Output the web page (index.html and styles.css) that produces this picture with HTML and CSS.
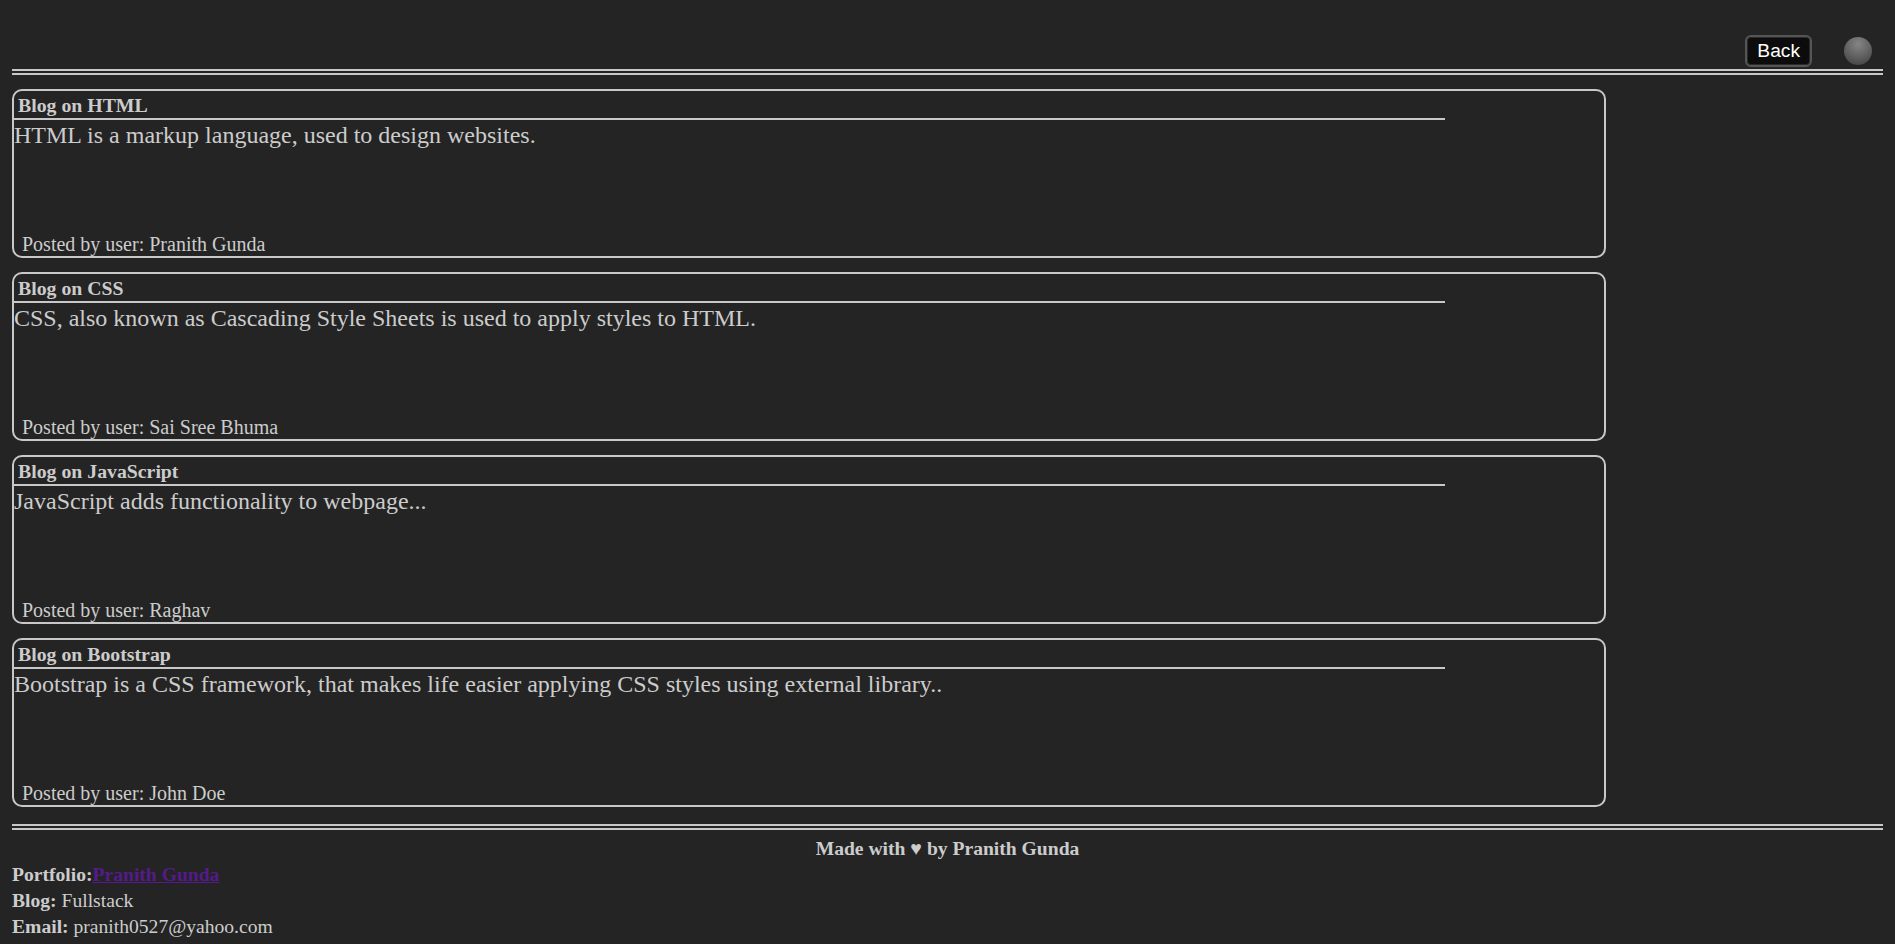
FILE: index.html
```html
<!DOCTYPE html>
<html lang="en">
<head>
<meta charset="utf-8">
<title>Blogs</title>
<link rel="stylesheet" href="styles.css">
</head>
<body>
<header class="topbar">
  <button class="back-btn" type="button">Back</button>
  <span class="toggle-dot"></span>
</header>
<main class="blog-list">
  <article class="card">
    <h3 class="card-title">Blog on HTML</h3>
    <p class="card-body">HTML is a markup language, used to design websites.</p>
    <p class="card-author">Posted by user: Pranith Gunda</p>
  </article>
  <article class="card">
    <h3 class="card-title">Blog on CSS</h3>
    <p class="card-body">CSS, also known as Cascading Style Sheets is used to apply styles to HTML.</p>
    <p class="card-author">Posted by user: Sai Sree Bhuma</p>
  </article>
  <article class="card">
    <h3 class="card-title">Blog on JavaScript</h3>
    <p class="card-body">JavaScript adds functionality to webpage...</p>
    <p class="card-author">Posted by user: Raghav</p>
  </article>
  <article class="card">
    <h3 class="card-title">Blog on Bootstrap</h3>
    <p class="card-body">Bootstrap is a CSS framework, that makes life easier applying CSS styles using external library..</p>
    <p class="card-author">Posted by user: John Doe</p>
  </article>
</main>
<footer class="footer">
  <p class="made">Made with &#9829; by Pranith Gunda</p>
  <p class="info"><b>Portfolio:</b><a class="link" href="#"><b>Pranith Gunda</b></a></p>
  <p class="info"><b>Blog:</b> Fullstack</p>
  <p class="info"><b>Email:</b> pranith0527@yahoo.com</p>
</footer>
</body>
</html>
```
FILE: styles.css
```css
html, body {
  margin: 0;
  padding: 0;
  background: #242424;
}
body {
  padding: 0 12px;
  color: #cccccc;
  font-family: "Liberation Serif", "Times New Roman", serif;
  font-size: 19.6px;
  overflow: hidden;
}
.topbar {
  display: flex;
  justify-content: flex-end;
  align-items: center;
  padding: 35px 0 2px;
  border-bottom: 6px double #c8c8c8;
}
.back-btn {
  font-family: "Liberation Sans", Arial, sans-serif;
  font-size: 19.2px;
  line-height: 22px;
  color: #ffffff;
  background: #0c0c0c;
  border: 2px solid #555555;
  border-radius: 6px;
  box-shadow: inset 0 0 0 1px #2a2a2a;
  padding: 3px 10px;
  margin: 0;
}
.toggle-dot {
  width: 28px;
  height: 28px;
  border-radius: 50%;
  margin-left: 32px;
  margin-right: 11px;
  background: radial-gradient(circle at 50% 25%, #858585 0%, #5e5e5e 55%, #3c3c3c 100%);
}
.blog-list {
  display: flex;
  flex-direction: column;
  gap: 14px;
  padding-top: 14px;
}
.card {
  width: 85%;
  height: 165px;
  border: 2px solid #c8c8c8;
  border-radius: 10px;
  display: flex;
  flex-direction: column;
}
.card-title {
  width: 90%;
  box-sizing: border-box;
  margin: 0;
  padding: 3px 4px 2px;
  font-size: 19.8px;
  line-height: 22px;
  font-weight: bold;
  border-bottom: 2px solid #c8c8c8;
}
.card-body {
  margin: 0;
  padding-top: 2px;
  font-size: 24px;
  line-height: 27px;
}
.card-author {
  margin: auto 0 0;
  padding-left: 8px;
  font-size: 20px;
  line-height: 23px;
}
.footer {
  margin-top: 17px;
  border-top: 6px double #c8c8c8;
  padding-top: 6px;
}
.footer p {
  margin: 0;
  line-height: 26px;
}
.made {
  text-align: center;
  font-weight: bold;
}
.link {
  color: #551a8b;
  text-decoration: underline;
}
```
